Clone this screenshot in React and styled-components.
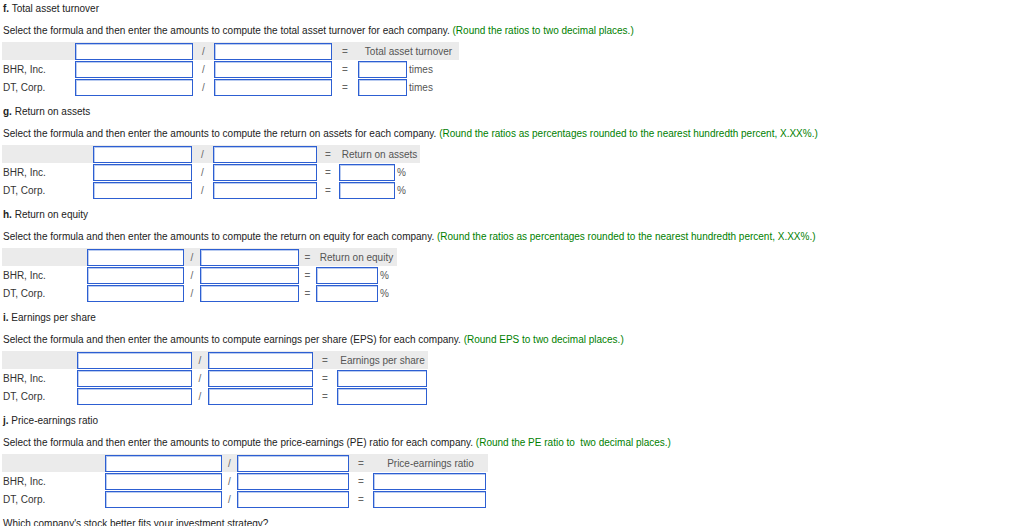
import React from "react";
import styled, { createGlobalStyle } from "styled-components";

const sections = [
  {
    letter: "f.",
    title: "Total asset turnover",
    text: "Select the formula and then enter the amounts to compute the total asset turnover for each company.",
    note: "(Round the ratios to two decimal places.)",
    result: "Total asset turnover",
    cols: "73px 118px 21px 118px 26px 101px",
    resultWidth: 49,
    unit: "times",
  },
  {
    letter: "g.",
    title: "Return on assets",
    text: "Select the formula and then enter the amounts to compute the return on assets for each company.",
    note: "(Round the ratios as percentages rounded to the nearest hundredth percent, X.XX%.)",
    result: "Return on assets",
    cols: "91px 99px 21px 104px 22px 81px",
    resultWidth: 56,
    unit: "%",
  },
  {
    letter: "h.",
    title: "Return on equity",
    text: "Select the formula and then enter the amounts to compute the return on equity for each company.",
    note: "(Round the ratios as percentages rounded to the nearest hundredth percent, X.XX%.)",
    result: "Return on equity",
    cols: "85px 97px 16px 99px 17px 81px",
    resultWidth: 62,
    unit: "%",
  },
  {
    letter: "i.",
    title: "Earnings per share",
    text: "Select the formula and then enter the amounts to compute earnings per share (EPS) for each company.",
    note: "(Round EPS to two decimal places.)",
    result: "Earnings per share",
    cols: "75px 115px 16px 105px 24px 91px",
    resultWidth: 90,
  },
  {
    letter: "j.",
    title: "Price-earnings ratio",
    text: "Select the formula and then enter the amounts to compute the price-earnings (PE) ratio for each company.",
    note: "(Round the PE ratio to\u00a0 two decimal places.)",
    result: "Price-earnings ratio",
    cols: "103px 117px 15px 112px 24px 115px",
    resultWidth: 113,
  },
];

const companies = ["BHR, Inc.", "DT, Corp."];

const App = () => {
  return (
    <>
      <GlobalStyle />
      <Page>
        {sections.map((s) => (
          <Section key={s.letter}>
            <Title><b>{s.letter}</b> {s.title}</Title>
            <Instruction>
              {s.text} <Note>{s.note}</Note>
            </Instruction>
            <Table>
              <Row cols={s.cols} $head>
                <Label />
                <Field />
                <Op>/</Op>
                <Field />
                <Op>=</Op>
                <ResultHead>{s.result}</ResultHead>
              </Row>
              {companies.map((c) => (
                <Row cols={s.cols} key={c}>
                  <Label>{c}</Label>
                  <Field />
                  <Op>/</Op>
                  <Field />
                  <Op>=</Op>
                  <Result>
                    <Field style={{ width: s.resultWidth }} />
                    {s.unit && <Unit>{s.unit}</Unit>}
                  </Result>
                </Row>
              ))}
            </Table>
          </Section>
        ))}
        <Title>Which company's stock better fits your investment strategy?</Title>
      </Page>
    </>
  );
};
export default App;

const GlobalStyle = createGlobalStyle`
  body {
    margin: 0;
    background: #fff;
    font-family: "Liberation Sans", Arial, sans-serif;
    font-size: 10px;
    color: #222;
  }
`;

const Page = styled.div`
  padding: 1px 0 0 2px;
  width: 1024px;
  height: 526px;
  box-sizing: border-box;
  overflow: hidden;
`;

const Section = styled.section`
  padding-bottom: 8px;
`;

const Title = styled.div`
  height: 16px;
  line-height: 16px;
  padding-left: 1px;
  color: #222;
  white-space: nowrap;

  b {
    font-weight: bold;
  }
`;

const Instruction = styled.div`
  margin-top: 6px;
  height: 16px;
  line-height: 16px;
  padding-left: 1px;
  margin-bottom: 3px;
  white-space: nowrap;
`;

const Note = styled.span`
  color: #008000;
`;

const Table = styled.div`
  display: flex;
  flex-direction: column;
  width: max-content;
`;

const Row = styled.div`
  display: grid;
  grid-template-columns: ${(p) => p.cols};
  height: 18px;
  align-items: end;
  background: ${(p) => (p.$head ? "#ebebeb" : "transparent")};
`;

const Label = styled.div`
  align-self: center;
  padding-left: 1px;
  color: #333;
`;

const Field = styled.div`
  box-sizing: border-box;
  height: 17px;
  width: 100%;
  background: #fff;
  border: 1px solid #2d5fd2;
  box-shadow: inset 1px 1px 0 #b9cbf0;
`;

const Op = styled.div`
  align-self: center;
  padding-top: 1px;
  text-align: center;
  color: #666;
`;

const ResultHead = styled.div`
  align-self: center;
  padding-top: 1px;
  text-align: center;
  color: #555;
  white-space: nowrap;
`;

const Result = styled.div`
  display: flex;
  align-items: center;
`;

const Unit = styled.span`
  margin-left: 2px;
  color: #555;
`;
